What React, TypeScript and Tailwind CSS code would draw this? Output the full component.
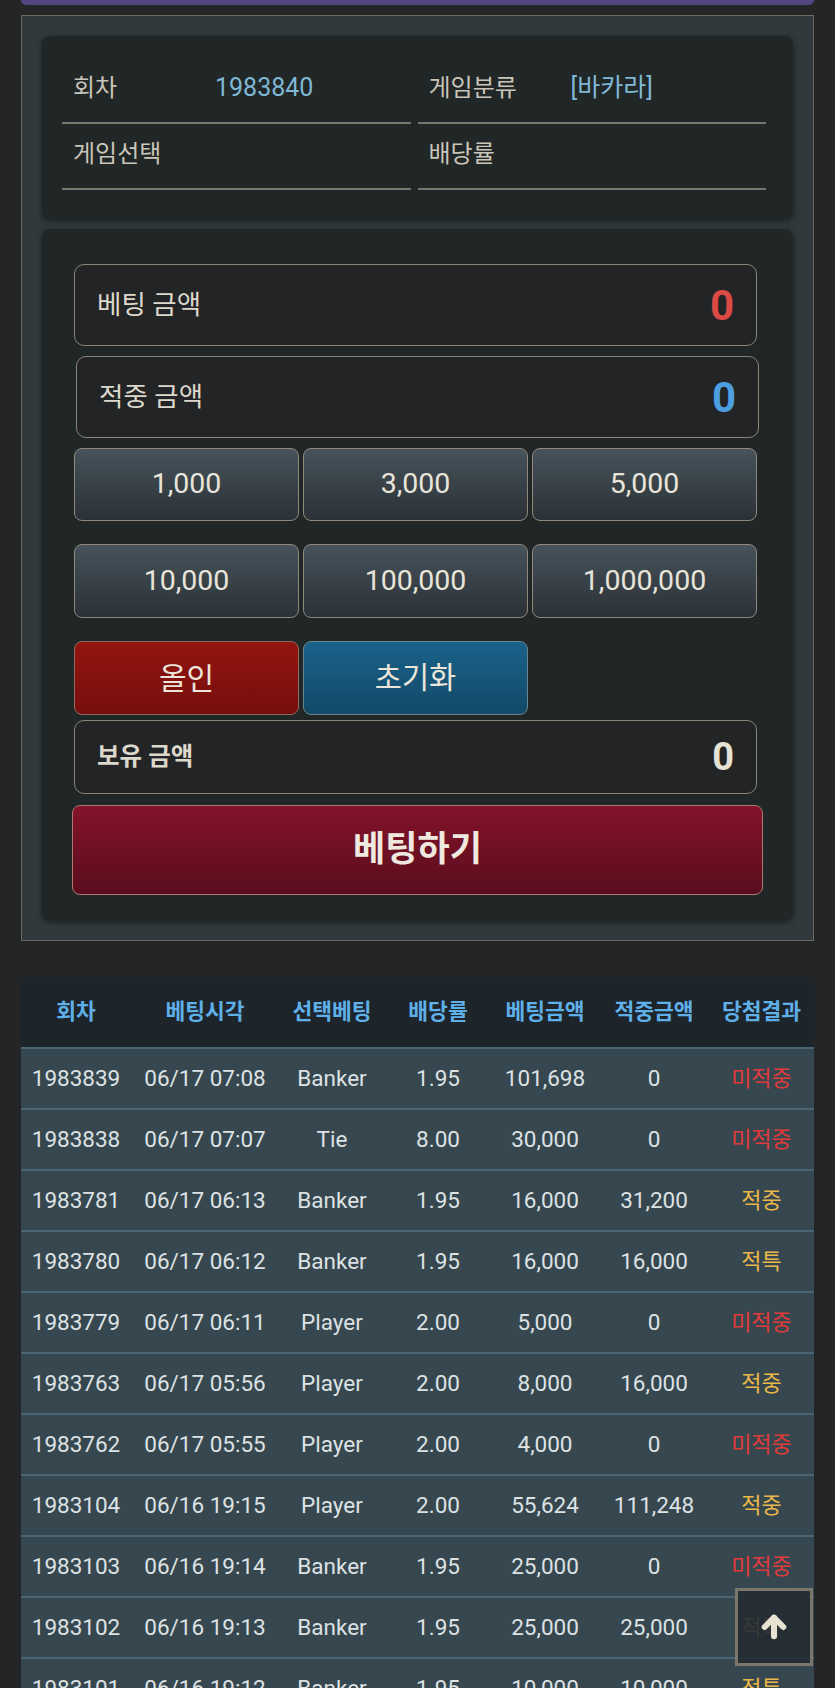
import { ArrowUp } from "lucide-react";

const FONT = { fontFamily: 'Roboto, "Noto Sans CJK KR", sans-serif' };

type Row = {
  round: string;
  time: string;
  pick: string;
  odds: string;
  bet: string;
  win: string;
  result: "미적중" | "적중" | "적특";
};

const rows: Row[] = [
  { round: "1983839", time: "06/17 07:08", pick: "Banker", odds: "1.95", bet: "101,698", win: "0", result: "미적중" },
  { round: "1983838", time: "06/17 07:07", pick: "Tie", odds: "8.00", bet: "30,000", win: "0", result: "미적중" },
  { round: "1983781", time: "06/17 06:13", pick: "Banker", odds: "1.95", bet: "16,000", win: "31,200", result: "적중" },
  { round: "1983780", time: "06/17 06:12", pick: "Banker", odds: "1.95", bet: "16,000", win: "16,000", result: "적특" },
  { round: "1983779", time: "06/17 06:11", pick: "Player", odds: "2.00", bet: "5,000", win: "0", result: "미적중" },
  { round: "1983763", time: "06/17 05:56", pick: "Player", odds: "2.00", bet: "8,000", win: "16,000", result: "적중" },
  { round: "1983762", time: "06/17 05:55", pick: "Player", odds: "2.00", bet: "4,000", win: "0", result: "미적중" },
  { round: "1983104", time: "06/16 19:15", pick: "Player", odds: "2.00", bet: "55,624", win: "111,248", result: "적중" },
  { round: "1983103", time: "06/16 19:14", pick: "Banker", odds: "1.95", bet: "25,000", win: "0", result: "미적중" },
  { round: "1983102", time: "06/16 19:13", pick: "Banker", odds: "1.95", bet: "25,000", win: "25,000", result: "적특" },
  { round: "1983101", time: "06/16 19:12", pick: "Banker", odds: "1.95", bet: "10,000", win: "10,000", result: "적특" },
];

const headers = ["회차", "베팅시각", "선택베팅", "배당률", "베팅금액", "적중금액", "당첨결과"];
const colW = ["w-[110px]", "w-[148px]", "w-[106px]", "w-[106px]", "w-[108px]", "w-[110px]", "w-[105px]"];

function InfoCell({ label, value }: { label: string; value?: string }) {
  return (
    <div className="flex h-[66px] items-center border-b-2 border-[#7a776a] pb-1 pl-[11px]">
      <span className="w-[142px] text-[24px] text-[#c9c5b8]">{label}</span>
      {value && <span className="text-[25px] text-[#7fb8d4]">{value}</span>}
    </div>
  );
}

function AmountBox({ label, value, color, bold, className = "" }: { label: string; value: string; color: string; bold?: boolean; className?: string }) {
  return (
    <div
      className={`flex items-center justify-between rounded-[10px] border-[1.5px] border-[#8a8578] bg-[#232425] pl-[22px] pr-[22px] ${className}`}>
      <span className={`text-[#ddd8cc] ${bold ? "text-[24.5px] font-bold" : "text-[26.5px]"}`}>{label}</span>
      <span className={`font-bold ${color} ${bold ? "text-[38px]" : "text-[42px]"}`}>{value}</span>
    </div>
  );
}

function Chip({ label }: { label: string }) {
  return (
    <button className="flex h-full items-center justify-center rounded-[8px] border-[1.5px] border-[#8f897c] bg-gradient-to-b from-[#47525b] to-[#2b3237] text-[28.5px] text-[#e8e4da]">
      {label}
    </button>
  );
}

export default function App() {
  return (
    <div className="min-h-screen bg-[#232526] pb-10" style={FONT}>
      <div className="mx-[21px] h-[5px] rounded-b-lg bg-[#534580]" />

      <div className="mx-[21px] mt-[10px] border border-[#6d6a5f] bg-[#30393b] px-5 pb-5 pt-5">
        {/* round info */}
        <div className="rounded-lg bg-[#212627] pb-[29px] pl-5 pr-[27px] pt-[22px] shadow-[0_2px_6px_rgba(0,0,0,0.45)]">
          <div className="grid grid-cols-2 gap-x-[7px]">
            <InfoCell label="회차" value="1983840" />
            <InfoCell label="게임분류" value="[바카라]" />
            <InfoCell label="게임선택" />
            <InfoCell label="배당률" />
          </div>
        </div>

        {/* bet form */}
        <div className="mt-[10px] flex flex-col rounded-lg bg-[#212627] pb-[25px] pl-[32px] pr-[36px] pt-[35px] shadow-[0_2px_6px_rgba(0,0,0,0.45)]">
          <AmountBox label="베팅 금액" value="0" color="text-[#dc4a45]" className="h-[82px]" />
          <AmountBox label="적중 금액" value="0" color="text-[#4d9fe0]" className="ml-[2px] -mr-[2px] mt-[10px] h-[82px]" />

          <div className="mt-[10px] grid h-[73px] grid-cols-3 gap-[4px]">
            <Chip label="1,000" />
            <Chip label="3,000" />
            <Chip label="5,000" />
          </div>
          <div className="mt-[23px] grid h-[74px] grid-cols-3 gap-[4px]">
            <Chip label="10,000" />
            <Chip label="100,000" />
            <Chip label="1,000,000" />
          </div>
          <div className="mt-[23px] grid h-[74px] grid-cols-3 gap-[4px]">
            <button className="flex items-center justify-center rounded-[8px] border-[1.5px] border-[#8f6a5e] bg-gradient-to-b from-[#93150f] to-[#760e0d] text-[30px] text-[#ece6da]">
              올인
            </button>
            <button className="flex items-center justify-center rounded-[8px] border-[1.5px] border-[#6b8590] bg-gradient-to-b from-[#1b628a] to-[#124968] text-[29.5px] text-[#ece6da]">
              초기화
            </button>
          </div>
          <AmountBox label="보유 금액" value="0" color="text-[#e6e2d6]" bold className="mt-[5px] h-[74px]" />

          <button className="-ml-[2px] -mr-[6px] mt-[11px] flex h-[90px] items-center justify-center rounded-[8px] border-[1.5px] border-[#a87a70] bg-gradient-to-b from-[#84132a] to-[#5a0d1d] text-[35px] font-bold text-[#f0e9e0]">
            베팅하기
          </button>
        </div>
      </div>

      {/* history */}
      <div className="mx-[21px] mt-[37px]">
        <div className="flex h-[69px] items-center bg-[#1d242a]">
          {headers.map((h, i) => (
            <div key={h} className={`${colW[i]} text-center text-[21.5px] font-bold text-[#5fb0e8]`}>
              {h}
            </div>
          ))}
        </div>
        {rows.map((r) => {
          const resColor = r.result === "미적중" ? "text-[#e03b3b]" : "text-[#e9b848]";
          const cells = [r.round, r.time, r.pick, r.odds, r.bet, r.win];
          return (
            <div key={r.round} className="flex h-[61px] items-center border-t-2 border-[#4a6575] bg-[#37474f] first:border-t-0">
              {cells.map((c, i) => (
                <div key={i} className={`${colW[i]} text-center text-[22.5px] text-[#dde2e4]`}>
                  {c}
                </div>
              ))}
              <div className={`${colW[6]} text-center text-[22px] ${resColor}`}>{r.result}</div>
            </div>
          );
        })}
      </div>

      <button className="fixed bottom-[22px] right-[22px] flex h-[78px] w-[78px] items-center justify-center border-[3px] border-[#7b766a] bg-[#242b32]/90">
        <ArrowUp size={32} strokeWidth={4.5} className="text-[#e8e2d2]" />
      </button>
    </div>
  );
}
